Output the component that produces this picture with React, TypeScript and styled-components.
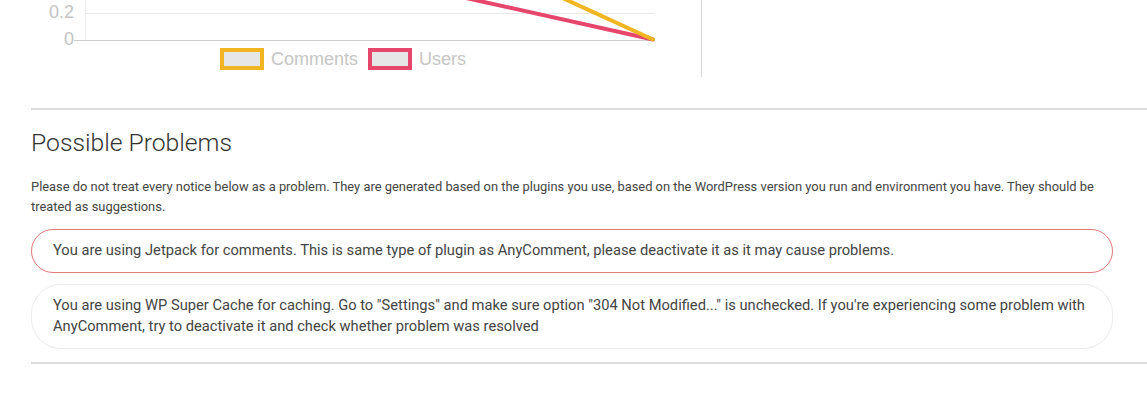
import React from "react";
import styled, { createGlobalStyle } from "styled-components";

const GlobalStyle = createGlobalStyle`
  html, body {
    margin: 0;
    padding: 0;
    background: #ffffff;
  }
  body {
    font-family: Roboto, "Noto Sans", Arial, sans-serif;
    color: #444;
    overflow: hidden;
  }
`;

const Page = styled.div`
  width: 1147px;
  height: 401px;
  padding-left: 31px;
  box-sizing: border-box;
  overflow: hidden;
`;

const TopRow = styled.div`
  display: flex;
  height: 77px;
`;

const ChartColumn = styled.div`
  width: 670px;
  border-right: 1px solid #d6d6d6;
  display: flex;
  flex-direction: column;
`;

const ChartSvg = styled.svg`
  display: block;
  width: 670px;
  height: 48px;
  overflow: hidden;
`;

const AxisLabel = styled.text`
  font-family: "Liberation Sans", Arial, sans-serif;
  font-size: 18px;
  fill: #c4c4c4;
`;

const Legend = styled.div`
  display: flex;
  align-items: center;
  gap: 10px;
  padding-left: 189px;
`;

const LegendItem = styled.div`
  display: flex;
  align-items: center;
  gap: 7px;
`;

const LegendSwatch = styled.span<{ $color: string }>`
  display: block;
  width: 44px;
  height: 22px;
  box-sizing: border-box;
  border: 4px solid ${(p) => p.$color};
  background: #e6e6e6;
`;

const LegendLabel = styled.span`
  font-family: "Liberation Sans", Arial, sans-serif;
  font-size: 18px;
  line-height: 22px;
  color: #c6c6c6;
`;

const Rule = styled.div<{ $top: number }>`
  height: 2px;
  background: #dcdcdc;
  margin-top: ${(p) => p.$top}px;
  margin-right: -40px;
`;

const Section = styled.div`
  width: 1082px;
  display: flex;
  flex-direction: column;
`;

const Heading = styled.h2`
  margin: 19px 0 0;
  font-family: Roboto, sans-serif;
  font-weight: 300;
  font-size: 24.7px;
  line-height: 28px;
  color: #333;
`;

const Intro = styled.p`
  margin: 20px 0 0;
  font-family: Roboto, sans-serif;
  font-size: 12.9px;
  line-height: 20px;
  color: #444;
`;

const NoticeList = styled.div`
  display: flex;
  flex-direction: column;
  gap: 11px;
  margin-top: 12px;
`;

const Notice = styled.div<{ $danger?: boolean }>`
  border: 1px solid ${(p) => (p.$danger ? "#e27979" : "#ececec")};
  border-radius: 30px;
  padding: 10px 21px;
  font-family: Roboto, sans-serif;
  font-size: 14.7px;
  line-height: 21.5px;
  color: #444;
`;

const RED = "#e6466c";
const YELLOW = "#f1b521";

export default function App() {
  return (
    <>
      <GlobalStyle />
      <Page>
        <TopRow>
          <ChartColumn>
            <ChartSvg viewBox="31 0 670 48">
              <line x1="85.5" y1="-5" x2="85.5" y2="40" stroke="#ececec" strokeWidth="1" />
              <line x1="85" y1="13.5" x2="655" y2="13.5" stroke="#e8e8e8" strokeWidth="1" />
              <line x1="74" y1="40.5" x2="655" y2="40.5" stroke="#cfcfcf" strokeWidth="1" />
              <line x1="430" y1="-10" x2="653" y2="39.5" stroke={RED} strokeWidth="4" strokeLinecap="round" />
              <line x1="545" y1="-10" x2="653" y2="39.5" stroke={YELLOW} strokeWidth="4" strokeLinecap="round" />
              <AxisLabel x="74" y="18" textAnchor="end">0.2</AxisLabel>
              <AxisLabel x="74" y="45" textAnchor="end">0</AxisLabel>
            </ChartSvg>
            <Legend>
              <LegendItem>
                <LegendSwatch $color={YELLOW} />
                <LegendLabel>Comments</LegendLabel>
              </LegendItem>
              <LegendItem>
                <LegendSwatch $color={RED} />
                <LegendLabel>Users</LegendLabel>
              </LegendItem>
            </Legend>
          </ChartColumn>
        </TopRow>
        <Rule $top={31} />
        <Section>
          <Heading>Possible Problems</Heading>
          <Intro>
            Please do not treat every notice below as a problem. They are generated based on the plugins you use, based on the WordPress version you run and environment you have. They should be treated as suggestions.
          </Intro>
          <NoticeList>
            <Notice $danger>
              You are using Jetpack for comments. This is same type of plugin as AnyComment, please deactivate it as it may cause problems.
            </Notice>
            <Notice>
              You are using WP Super Cache for caching. Go to "Settings" and make sure option "304 Not Modified..." is unchecked. If you're experiencing some problem with AnyComment, try to deactivate it and check whether problem was resolved
            </Notice>
          </NoticeList>
        </Section>
        <Rule $top={13.5} />
      </Page>
    </>
  );
}
